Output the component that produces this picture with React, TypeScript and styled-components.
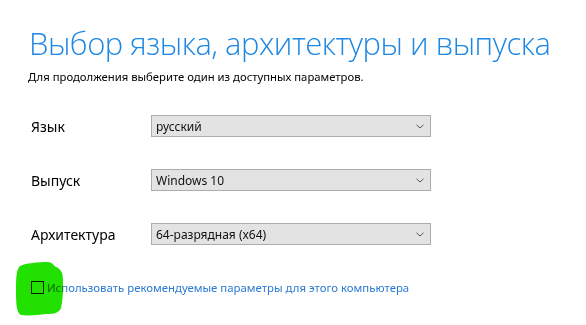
import React from "react";
import styled, { createGlobalStyle } from "styled-components";

const Global = createGlobalStyle`
  html, body { margin: 0; padding: 0; background: #ffffff; }
  body { font-family: "Noto Sans", "Open Sans", "Liberation Sans", sans-serif; }
`;

const Page = styled.div`
  position: relative;
  width: 586px;
  height: 325px;
  overflow: hidden;
  background: #fff;
  padding: 21px 0 0 28px;
  box-sizing: border-box;
  display: flex;
  flex-direction: column;
`;

const Title = styled.h1`
  margin: 0 0 0 1px;
  font-family: "Open Sans", "Noto Sans", sans-serif;
  font-weight: 300;
  font-size: 31px;
  letter-spacing: -0.5px;
  line-height: 44px;
  color: #1e88e3;
  white-space: nowrap;
`;

const Subtitle = styled.p`
  margin: 4px 0 0 0;
  font-size: 11.3px;
  line-height: 16px;
  color: #000;
  white-space: nowrap;
`;

const Form = styled.div`
  margin-top: 30px;
  display: flex;
  flex-direction: column;
  gap: 32px;
`;

const Row = styled.div`
  display: flex;
  align-items: center;
  height: 22px;
`;

const Label = styled.span`
  width: 123px;
  padding-left: 3px;
  box-sizing: border-box;
  font-size: 14px;
  color: #000;
  white-space: nowrap;
`;

const Select = styled.div`
  width: 280px;
  height: 22px;
  box-sizing: border-box;
  border: 1px solid #acacac;
  background: #e3e3e3;
  display: flex;
  align-items: center;
  justify-content: space-between;
  padding: 0 6px 0 4px;
  font-size: 12px;
  color: #111;
`;

const Chevron = () => (
  <svg width="8" height="5" viewBox="0 0 8 5">
    <path d="M0.5 0.8 L4 4 L7.5 0.8" fill="none" stroke="#555" strokeWidth="1" />
  </svg>
);

const CheckRow = styled.label`
  margin-top: 35px;
  margin-left: 3px;
  display: flex;
  align-items: center;
  gap: 3px;
  font-size: 11.4px;
  color: #2b7ad3;
  white-space: nowrap;
  position: relative;
`;

const Box = styled.span`
  width: 13px;
  height: 13px;
  box-sizing: border-box;
  border: 1px solid #222;
  background: #fff;
  flex: none;
`;

const Highlight = styled.svg`
  position: absolute;
  left: 16px;
  top: 262px;
  mix-blend-mode: multiply;
  pointer-events: none;
`;

const rows = [
  { label: "Язык", value: "русский" },
  { label: "Выпуск", value: "Windows 10" },
  { label: "Архитектура", value: "64-разрядная (x64)" },
];

export default function App() {
  return (
    <>
      <Global />
      <Page>
        <Title>Выбор языка, архитектуры и выпуска</Title>
        <Subtitle>Для продолжения выберите один из доступных параметров.</Subtitle>
        <Form>
          {rows.map((r) => (
            <Row key={r.label}>
              <Label>{r.label}</Label>
              <Select>
                <span>{r.value}</span>
                <Chevron />
              </Select>
            </Row>
          ))}
        </Form>
        <CheckRow>
          <Box />
          Использовать рекомендуемые параметры для этого компьютера
        </CheckRow>
        <Highlight width="48" height="54" viewBox="0 0 48 54">
          <path
            d="M4 4 C10 1 22 0 32 0 C36 0 37 3 40 5 C45 7 47 11 47 18 C47 28 47 38 45 46 C43 51 38 52 30 52 C22 53 12 54 5 53 C1 51 0 44 0 30 C0 18 0 8 4 4 Z"
            fill="#22e000"
          />
        </Highlight>
      </Page>
    </>
  );
}
